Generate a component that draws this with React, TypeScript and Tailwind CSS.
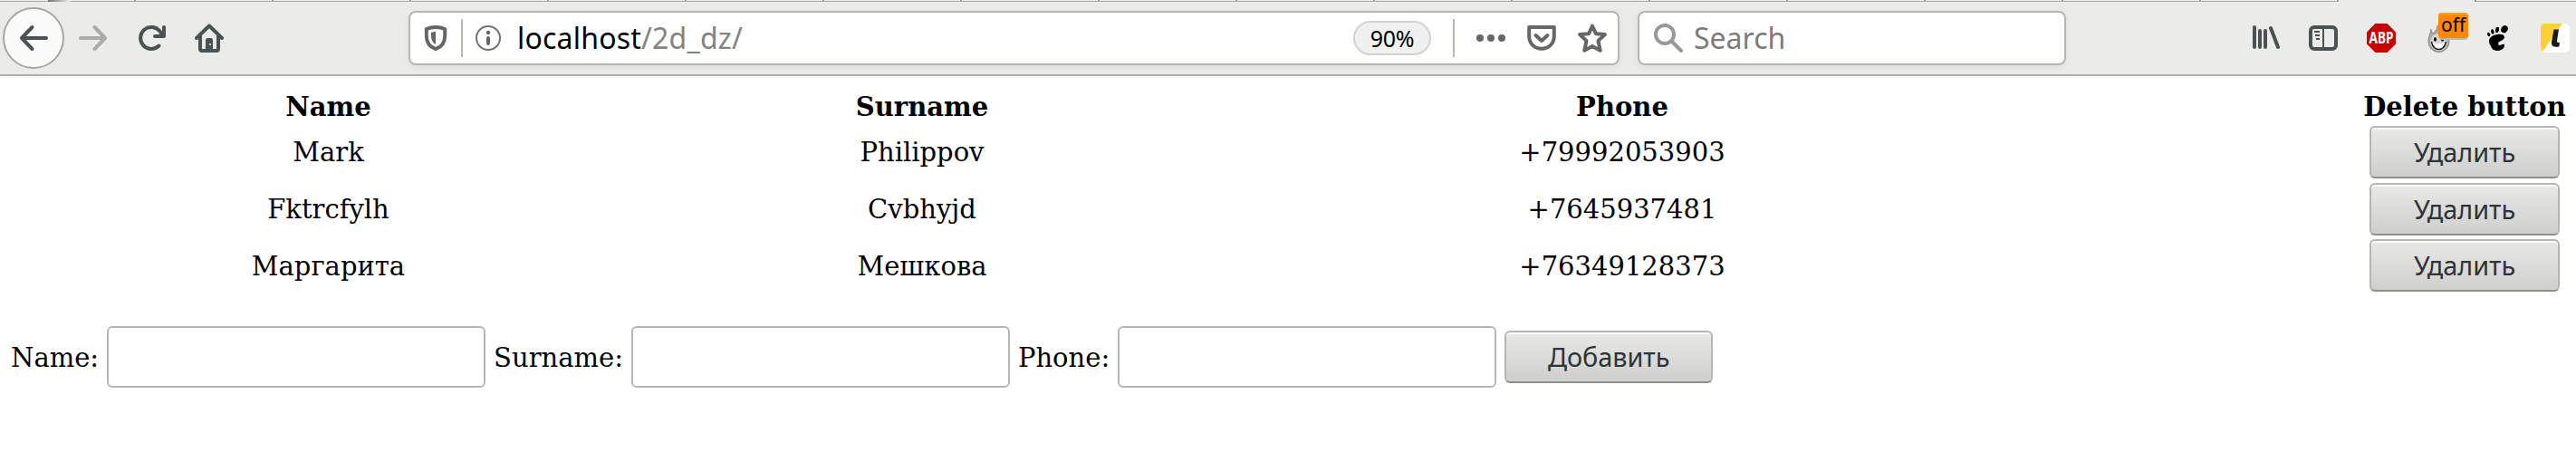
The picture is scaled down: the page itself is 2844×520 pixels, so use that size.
const rows = [
  { name: "Mark", surname: "Philippov", phone: "+79992053903" },
  { name: "Fktrcfylh", surname: "Cvbhyjd", phone: "+7645937481" },
  { name: "Маргарита", surname: "Мешкова", phone: "+76349128373" },
];

const tabs = Array.from({ length: 18 }, (_, i) => i);
const activeTab = 16;

const gtkButton =
  "h-[58px] rounded-[6px] border-2 border-[#b6b6b3] border-b-[#8f8f8a] bg-linear-to-b from-[#e8e8e7] to-[#cfcfcd] shadow-[inset_0_2px_0_#fbfbfb] font-['Noto_Sans',sans-serif] text-[28.8px] leading-[54px] text-[#2e3436]";

const columns = "grid grid-cols-[697px_614px_932px_349px_230px]";

function TabStrip() {
  return (
    <div className="flex h-[2px] shrink-0 bg-[#f0f0f0]">
      <div className="h-[2px] w-[53px] shrink-0 border-b border-[#aaacab]" />
      <div className="h-[2px] w-[24px] shrink-0 bg-linear-to-r from-[#73716c] to-[#eeeeec]" />
      <div className="h-[2px] w-[73px] shrink-0 border-r-2 border-b border-r-[#9a9d9f] border-b-[#aaacab]" />
      {tabs.map((i) => (
        <div
          key={i}
          className={
            i === activeTab
              ? "h-[2px] w-[152px] shrink-0 border-r-2 border-[#8b8e8f] bg-[#ebebe9]"
              : "h-[2px] w-[152px] shrink-0 border-r-2 border-b border-b-[#aaacab] border-r-[#9a9d9f]"
          }
        />
      ))}
    </div>
  );
}

function UrlBar() {
  return (
    <div className="ml-[204px] flex h-[60px] w-[1337px] shrink-0 items-center rounded-[8px] border-2 border-[#b6b6b3] bg-white shadow-[0_2px_8px_rgba(0,0,0,0.06)]">
      <svg className="ml-[12px] size-8" viewBox="0 0 32 32" fill="none">
        <path d="M16 4c4 0 7.500.8 10.200 2v7.500c0 7-3.600 12.300-10.200 14.700C9.400 25.800 5.800 20.500 5.800 13.500V6C8.500 4.800 12 4 16 4Z" stroke="#666" strokeWidth="4" strokeLinejoin="round" />
        <path d="M16 9v14c-3.500-1.700-5-5-5-9.500V10c1.500-.6 3-1 5-1Z" fill="#666" />
      </svg>
      <div className="ml-[12px] h-[42px] w-[2px] bg-[#b9b8b1]" />
      <svg className="ml-[12px] size-8" viewBox="0 0 32 32" fill="none">
        <circle cx="16" cy="16" r="13" stroke="#737373" strokeWidth="2" />
        <circle cx="16" cy="10" r="2.200" fill="#666" />
        <path d="M16 16v6" stroke="#666" strokeWidth="4" strokeLinecap="round" />
      </svg>
      <div className="ml-[16px] grow font-['Noto_Sans',sans-serif] text-[32px] leading-none tracking-[0.2px] text-black">
        localhost<span className="text-[#838383]">/2d_dz/</span>
      </div>
      <div className="flex h-[38px] w-[86px] items-center justify-center rounded-full border-2 border-[#d2d2d2] bg-[#f0f0f0] font-['Noto_Sans',sans-serif] text-[25px] tracking-[-0.3px] text-black">
        90%
      </div>
      <div className="ml-[24px] h-[42px] w-[2px] bg-[#b9b8b1]" />
      <svg className="ml-[24px] size-8" viewBox="0 0 32 32" fill="#666">
        <circle cx="4" cy="16" r="4" />
        <circle cx="16" cy="16" r="4" />
        <circle cx="28" cy="16" r="4" />
      </svg>
      <svg className="ml-[24px] size-8" viewBox="0 0 32 32" fill="none" stroke="#666" strokeWidth="4" strokeLinecap="round" strokeLinejoin="round">
        <path d="M2.200 4h27.600v10c0 8-6 13.800-13.800 13.800S2.200 22 2.200 14Z" />
        <path d="m9.500 13 6.500 6 6.500-6" />
      </svg>
      <svg className="mr-[12px] ml-[24px] size-8" viewBox="0 0 32 32" fill="none" stroke="#666" strokeWidth="4" strokeLinejoin="round">
        <path d="m16 2.500 3.900 8.700 10 .9-7.400 6.900 2.200 10.700L16 25l-8.700 4.700L9.500 19 2.100 12.100l10-.9Z" />
      </svg>
    </div>
  );
}

function Toolbar() {
  return (
    <div className="flex h-[82px] shrink-0 items-center border-b-2 border-[#b0b0ae] bg-[#ebebe9]">
      <div className="ml-[3px] flex size-[68px] items-center justify-center rounded-full border-2 border-[#a6a6a4] bg-[#fbfbfb]">
        <svg className="size-8" viewBox="0 0 32 32" fill="none" stroke="#4b5253" strokeWidth="4" strokeLinecap="round" strokeLinejoin="round">
          <path d="M30 16H3M14.500 4 3 16l11.500 12" />
        </svg>
      </div>
      <svg className="ml-[16px] size-8" viewBox="0 0 32 32" fill="none" stroke="#aaabaa" strokeWidth="4" strokeLinecap="round" strokeLinejoin="round">
        <path d="M2 16h27M17.500 4 29 16 17.500 28" />
      </svg>
      <svg className="ml-[32px] size-8" viewBox="0 0 32 32" fill="none" stroke="#4b5253" strokeWidth="4" strokeLinecap="round" strokeLinejoin="round">
        <path d="M24.500 24.500A12 12 0 1 1 25.500 8.500l3 4.500" />
        <path d="M30 4v10H20" />
      </svg>
      <svg className="ml-[32px] size-8" viewBox="0 0 32 32" fill="none" stroke="#4b5253" strokeWidth="4" strokeLinecap="round" strokeLinejoin="round">
        <path d="M2 16 16 2.500 30 16" />
        <path d="M6 14v14q0 2 2 2h16q2 0 2-2V14" />
        <path d="M12 30V18.500q0-2.500 2.500-2.500h3q2.500 0 2.500 2.500V30Z" fill="#4b5253" stroke="none" />
        <circle cx="17" cy="23" r="1" fill="#ebebe9" stroke="none" />
      </svg>
      <UrlBar />
      <div className="ml-[20px] flex h-[60px] w-[473px] items-center rounded-[8px] border-2 border-[#b6b6b3] bg-white shadow-[0_2px_8px_rgba(0,0,0,0.06)]">
        <svg className="ml-[16px] size-8" viewBox="0 0 32 32" fill="none" stroke="#999" strokeWidth="4" strokeLinecap="round">
          <circle cx="12" cy="12" r="10" />
          <path d="m19.500 19.500 10.500 10.500" />
        </svg>
        <div className="ml-[12px] font-['Noto_Sans',sans-serif] text-[32px] leading-none text-[#7b7b7b]">Search</div>
      </div>
      <svg className="ml-[204px] size-8" viewBox="0 0 32 32" fill="none" stroke="#4b5253" strokeWidth="4" strokeLinecap="round">
        <path d="M4 4v22M10 8v18M16 8v18M22 5l8 21" />
      </svg>
      <svg className="ml-[32px] size-8" viewBox="0 0 32 32" fill="none" stroke="#4b5253">
        <rect x="2" y="4" width="28" height="24" rx="4" strokeWidth="4" />
        <path d="M16 5v22M6 9h6M7 13h5M8 17h4" strokeWidth="2" />
      </svg>
      <svg className="ml-[32px] size-8 overflow-visible" viewBox="0 0 32 32">
        <path d="M9.400 0h13.200L32 9.400v13.200L22.600 32H9.400L0 22.600V9.400Z" fill="#c70000" />
        <text x="16" y="22" textAnchor="middle" textLength="27" lengthAdjust="spacingAndGlyphs" fontFamily="Noto Sans, sans-serif" fontWeight="700" fontSize="17.500" fill="#fff">ABP</text>
      </svg>
      <div className="relative ml-[32px] size-8">
        <svg className="size-8" viewBox="0 0 32 32">
          <path d="M14 2c0 4-2 6-5 9-1-1-2-3-2-5-.5 5-3 8-3 14a11.500 11.500 0 0 0 23 0c0-7-5-9-8-13-2-2-3-3-5-5Z" fill="#a8a8a8" stroke="#8c8c8c" strokeWidth="1" />
          <ellipse cx="15.500" cy="20.500" rx="9.500" ry="9.500" fill="#d8d8d8" />
          <ellipse cx="11.500" cy="17.500" rx="1.500" ry="2.200" />
          <ellipse cx="19.500" cy="17.500" rx="1.500" ry="2.200" />
          <path d="M7.500 20.500q8 4 16 0-2 8-8 8t-8-8Z" fill="#fff" />
          <path d="M7.500 20.500q2 8 8 8t8-8" fill="none" stroke="#222" strokeWidth="1.600" strokeLinecap="round" />
        </svg>
        <div className="absolute -top-[12px] left-[15px] flex h-[28px] w-[33px] items-center justify-center rounded-[4px] bg-[#ff8800] pb-[3px] font-['Noto_Sans',sans-serif] text-[21px] text-black shadow-[0_2px_0_#b8b8b6,inset_0_2px_0_#ff9d2e]">off</div>
      </div>
      <svg className="ml-[32px] size-8" viewBox="0 0 32 32">
        <ellipse cx="24" cy="6.200" rx="3.600" ry="4.200" transform="rotate(35 24 6.200)" />
        <ellipse cx="16" cy="7" rx="2" ry="3.200" transform="rotate(10 16 7)" />
        <ellipse cx="10.800" cy="9" rx="1.700" ry="2.700" transform="rotate(-12 10.800 9)" />
        <ellipse cx="6.700" cy="12" rx="1.500" ry="2.300" transform="rotate(-25 6.700 12)" />
        <path d="M24 15c0-3-4-4-8-3-6 1-9 4-9 7 0 4 2 5 3 8 1 2 4 3.200 7 3 4-.3 7-3 7-6 0-2-2-1.500-3.500-.5-2 1-3.500.5-3.500-1.500 0-3 7-3 7-7Z" />
      </svg>
      <svg className="ml-[32px] size-8" viewBox="0 0 32 32">
        <rect width="32" height="32" rx="5" fill="#fff" />
        <path d="M5 0h19L2 31q-2-1-2-4V5q0-5 5-5Z" fill="#ffd035" />
        <path d="M14.500 6.500H20L18 19q-.3 2 1.500 2H21l-.7 4.500q-9 1.500-8.300-5Z" fill="#1c1c1c" />
      </svg>
    </div>
  );
}

function Field({ label }: { label: string }) {
  return (
    <label className="flex items-center">
      <span className="pt-[2px]">{label}</span>
      <input type="text" className="mr-[9px] ml-[9px] h-[68px] w-[418px] rounded-[6px] border-2 border-[#b6b6b3] bg-white px-3" />
    </label>
  );
}

export default function App() {
  return (
    <div className="flex h-[520px] w-[2844px] flex-col overflow-hidden bg-white font-['DejaVu_Serif',serif] text-[29px] leading-[34px] text-black">
      <TabStrip />
      <Toolbar />
      <main>
        <div className="pl-[14px]">
          <div className={`${columns} h-[53px] pt-[17px] text-center font-bold`}>
            <div>Name</div>
            <div>Surname</div>
            <div>Phone</div>
            <div />
            <div className="whitespace-nowrap">Delete button</div>
          </div>
          {rows.map((row) => (
            <div key={row.name} className={`${columns} h-[62.6px] pt-[2px] text-center`}>
              <div className="pt-[12.4px]">{row.name}</div>
              <div className="pt-[12.4px]">{row.surname}</div>
              <div className="pt-[12.4px]">{row.phone}</div>
              <div />
              <div>
                <button className={`${gtkButton} mx-auto block w-[210px]`}>Удалить</button>
              </div>
            </div>
          ))}
        </div>
        <form className="mt-[35px] flex items-center pl-[12px]">
          <Field label="Name:" />
          <Field label="Surname:" />
          <Field label="Phone:" />
          <button type="button" className={`${gtkButton} w-[230px]`}>Добавить</button>
        </form>
      </main>
    </div>
  );
}
